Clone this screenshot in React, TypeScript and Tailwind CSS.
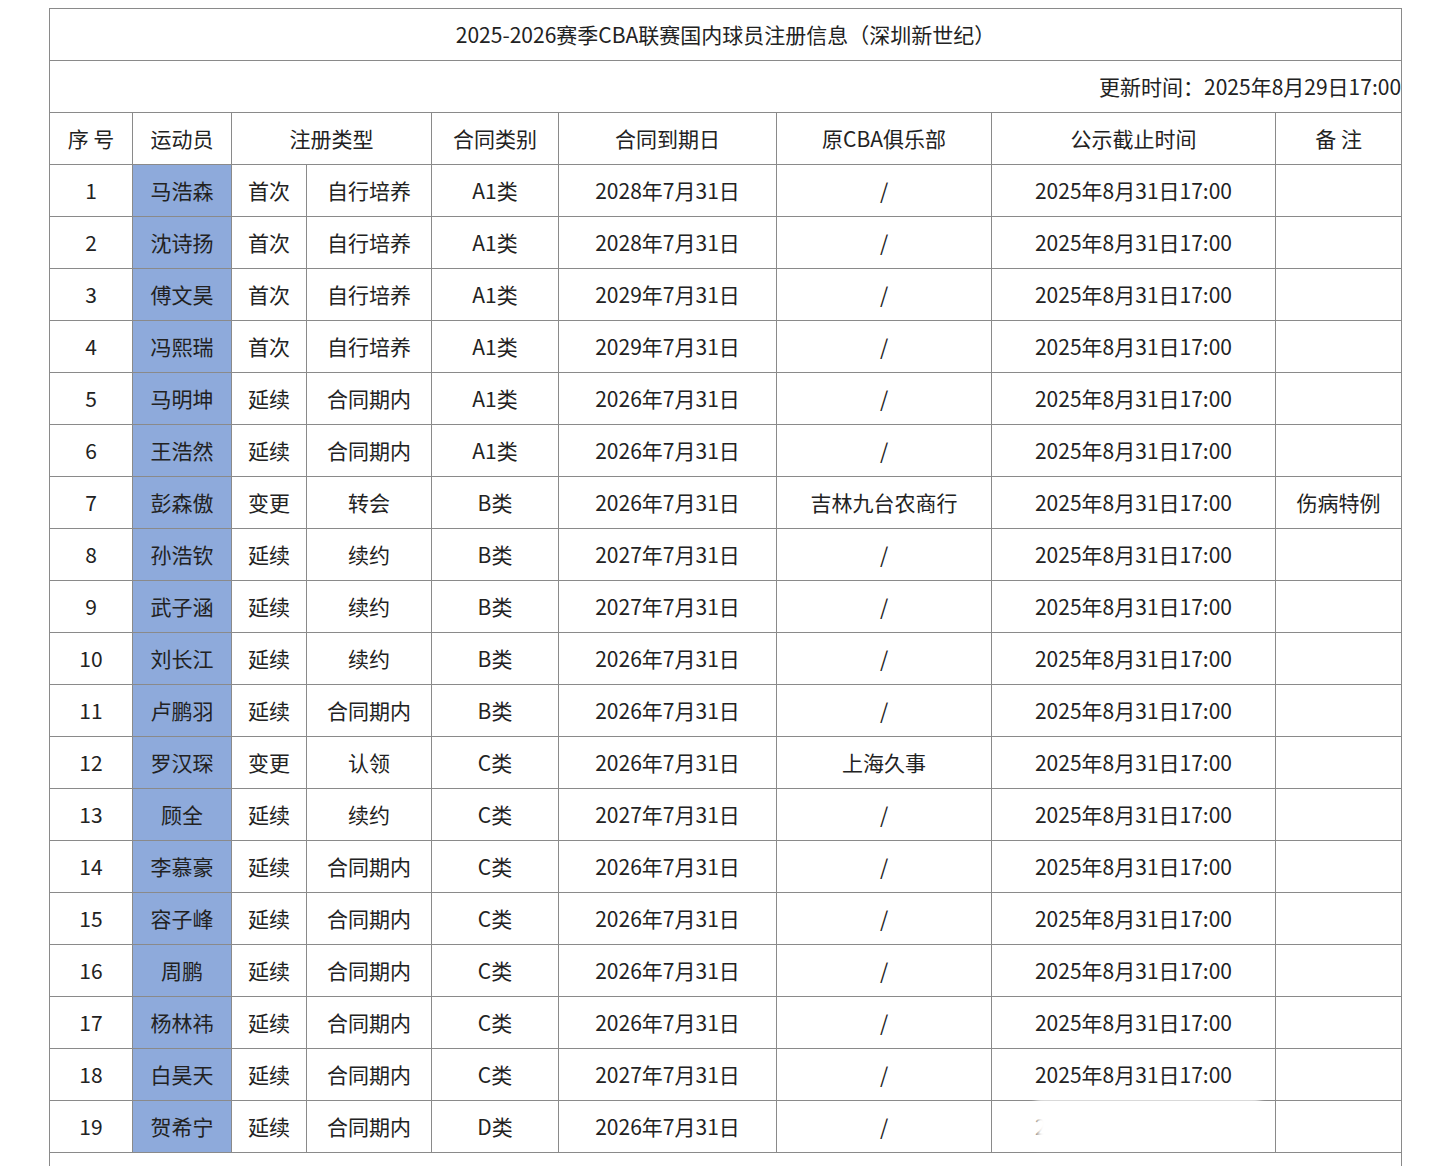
import React from "react";

const rows: string[][] = [
["1","马浩森","首次","自行培养","A1类","2028年7月31日","/",""],
["2","沈诗扬","首次","自行培养","A1类","2028年7月31日","/",""],
["3","傅文昊","首次","自行培养","A1类","2029年7月31日","/",""],
["4","冯熙瑞","首次","自行培养","A1类","2029年7月31日","/",""],
["5","马明坤","延续","合同期内","A1类","2026年7月31日","/",""],
["6","王浩然","延续","合同期内","A1类","2026年7月31日","/",""],
["7","彭森傲","变更","转会","B类","2026年7月31日","吉林九台农商行","伤病特例"],
["8","孙浩钦","延续","续约","B类","2027年7月31日","/",""],
["9","武子涵","延续","续约","B类","2027年7月31日","/",""],
["10","刘长江","延续","续约","B类","2026年7月31日","/",""],
["11","卢鹏羽","延续","合同期内","B类","2026年7月31日","/",""],
["12","罗汉琛","变更","认领","C类","2026年7月31日","上海久事",""],
["13","顾全","延续","续约","C类","2027年7月31日","/",""],
["14","李慕豪","延续","合同期内","C类","2026年7月31日","/",""],
["15","容子峰","延续","合同期内","C类","2026年7月31日","/",""],
["16","周鹏","延续","合同期内","C类","2026年7月31日","/",""],
["17","杨林祎","延续","合同期内","C类","2026年7月31日","/",""],
["18","白昊天","延续","合同期内","C类","2027年7月31日","/",""],
["19","贺希宁","延续","合同期内","D类","2026年7月31日","/",""],
];

const td = "border border-[#8a8a8a] text-center h-[52px] p-0";

export default function App() {
  return (
    <div className="bg-white w-[1452px] h-[1166px] overflow-hidden pt-[8px] pl-[49px] text-[#222] text-[21px]" style={{ fontFamily: '"Noto Sans CJK SC","Noto Sans",sans-serif' }}>
      <table className="border-collapse table-fixed w-[1352px]">
        <colgroup>
          {[83,99,75,125,127,218,215,284,126].map((w,i)=><col key={i} style={{width:w}} />)}
        </colgroup>
        <tbody>
          <tr><td colSpan={9} className={td + " h-[51px]"}>2025-2026赛季CBA联赛国内球员注册信息（深圳新世纪）</td></tr>
          <tr><td colSpan={9} className={td + " text-right pr-0"}>更新时间：2025年8月29日17:00</td></tr>
          <tr>
            <td className={td}>序 号</td>
            <td className={td}>运动员</td>
            <td colSpan={2} className={td}>注册类型</td>
            <td className={td}>合同类别</td>
            <td className={td}>合同到期日</td>
            <td className={td}>原CBA俱乐部</td>
            <td className={td}>公示截止时间</td>
            <td className={td}>备 注</td>
          </tr>
          {rows.map((r,i)=>(
            <tr key={i}>
              <td className={td}>{r[0]}</td>
              <td className={td + " bg-[#8eaadb]"}>{r[1]}</td>
              <td className={td}>{r[2]}</td>
              <td className={td}>{r[3]}</td>
              <td className={td}>{r[4]}</td>
              <td className={td}>{r[5]}</td>
              <td className={td}>{r[6]}</td>
              <td className={td + " relative"}>
                2025年8月31日17:00
                {i===18 && <div className="absolute left-[44px] top-[-2px] w-[224px] h-[48px] bg-white blur-[3px]" />}
              </td>
              <td className={td}>{r[7]}</td>
            </tr>
          ))}
          <tr><td colSpan={9} className={td}></td></tr>
        </tbody>
      </table>
    </div>
  );
}
